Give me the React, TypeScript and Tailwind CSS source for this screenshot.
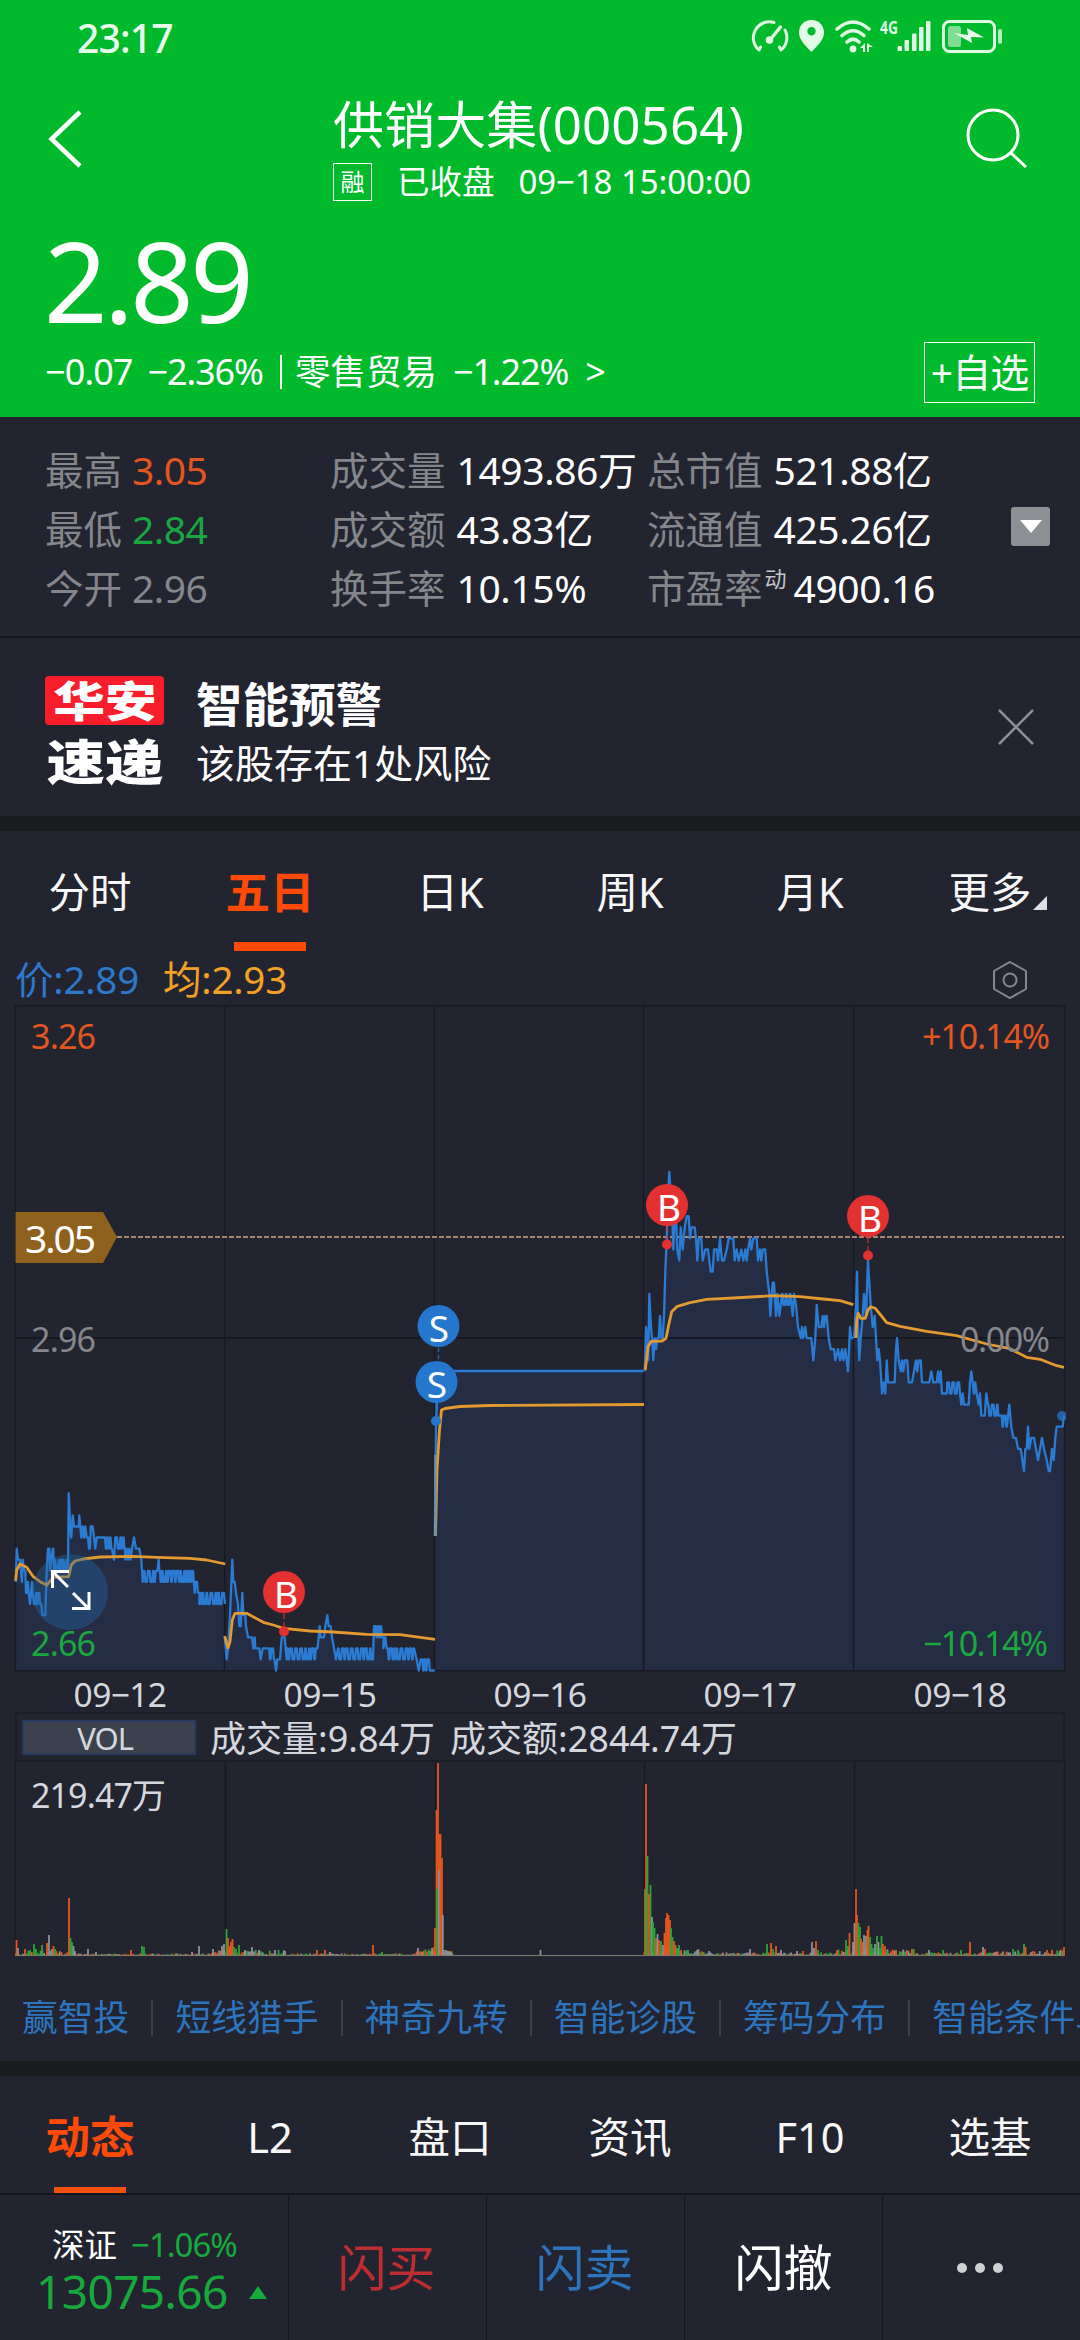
import React from "react";

type Step = [number, number] | [number, number, number, number];

const priceY = (p: number) => 1670.5 - 1005 - (p - 266) * 11.08;

const jitter = (n: number) => {
  const v = Math.sin(n * 127.1 + 11.7) * 43758.5453;
  return v - Math.floor(v);
};

/** Expands [x, price] knots and [from, to, low, high] oscillating spans. */
function expand(steps: Step[], originX: number): [number, number][] {
  const out: [number, number][] = [];
  steps.forEach((s) => {
    if (s.length === 2) {
      out.push([originX + s[0] / 3, priceY(s[1])]);
      return;
    }
    const [from, to, low, high] = s;
    let up = true;
    let x = from;
    while (x < to) {
      const y = priceY(up ? high : low);
      out.push([originX + x / 3, y]);
      const hold = jitter(x) > 0.55 ? 5 : 1.5;
      out.push([originX + (x + hold) / 3, y]);
      x += hold + 2.6;
      up = !up;
    }
  });
  return out;
}

const toPath = (pts: [number, number][]) =>
  "M" + pts.map(([x, y]) => `${x.toFixed(1)} ${y.toFixed(1)}`).join("L");

const DAY1 = expand(
  [
    [47, 274], [50, 277], [54, 276], [60, 276], [63, 275], [66, 274], [68, 276], [72, 275], [76, 275], [78, 273], [82, 273],
    [84, 274], [86, 273], [90, 272], [93, 273], [96, 274], [98, 273], [102, 272], [106, 272], [108, 273], [112, 272], [114, 273],
    [118, 273], [120, 272], [124, 272], [127, 271], [136, 271], [138, 273], [140, 275], [144, 277], [148, 277], [150, 275],
    [154, 276], [158, 277], [160, 277], [162, 275], [166, 276], [168, 275], [172, 275], [178, 276], [180, 275], [184, 276],
    [188, 275], [190, 276], [196, 275], [200, 276], [204, 275], [206, 282], [208, 281], [210, 279], [214, 278], [218, 280],
    [222, 279], [236, 279], [238, 280], [241, 279], [244, 278], [248, 279], [252, 278], [256, 279], [260, 278], [264, 278],
    [267, 277], [270, 277], [272, 279], [278, 279], [282, 278], [286, 277], [290, 278], [308, 278], [310, 338, 277, 278],
    [342, 276], [346, 374, 277, 278], [376, 276], [380, 277], [384, 276], [388, 277], [392, 276], [396, 277], [402, 278],
    [408, 277], [418, 277], [424, 276], [428, 274], [432, 472, 274, 275], [476, 276], [478, 578, 274, 275], [584, 273],
    [586, 594, 273, 274], [598, 272], [600, 668, 272, 273], [675, 272],
  ],
  0,
);

const DAY2 = expand(
  [
    [674, 269], [680, 267], [684, 268], [690, 271], [697, 276], [700, 274], [704, 274], [708, 273], [714, 272], [718, 270],
    [722, 270], [727, 273], [730, 271], [736, 271], [738, 270], [744, 269], [756, 269], [760, 268], [764, 269], [766, 268],
    [778, 268], [782, 267], [788, 268], [804, 268], [806, 824, 267, 268], [828, 266], [832, 267], [840, 267], [845, 269],
    [854, 269], [860, 267], [862, 950, 267, 268], [956, 269], [959, 270], [962, 269], [972, 269], [976, 270], [982, 271],
    [986, 270], [992, 270], [996, 269], [1002, 268], [1008, 267], [1014, 1118, 267, 268], [1122, 1146, 269, 270], [1150, 268],
    [1156, 269], [1160, 268], [1162, 1244, 267, 268], [1250, 267], [1256, 266], [1262, 1292, 266, 267], [1304, 266],
  ],
  0,
);

const DAY3: [number, number][] = [
  [434.8, 531], [436, 419], [438.5, 366], [643.6, 366],
];

const DAY4 = expand(
  [
    [14, 293], [18, 297], [22, 296], [25, 294], [28, 300], [33, 297], [36, 296], [40, 294], [44, 296], [48, 295], [52, 296],
    [56, 296], [60, 298], [64, 296], [68, 296], [72, 298], [76, 302], [80, 305], [84, 309], [88, 311], [92, 309], [96, 308],
    [100, 304], [104, 307], [108, 307], [112, 304], [118, 303], [122, 306], [128, 304], [134, 306], [140, 307], [146, 307],
    [150, 305], [154, 306], [164, 306], [168, 305], [172, 303], [176, 305], [184, 305], [188, 303], [196, 304], [204, 304],
    [208, 303], [212, 302], [218, 302], [222, 304], [230, 304], [234, 303], [240, 305], [246, 303], [252, 303], [260, 304],
    [266, 305], [280, 305], [284, 303], [290, 304], [296, 303], [304, 304], [310, 303], [316, 304], [320, 303], [324, 304],
    [330, 305], [334, 304], [340, 305], [350, 305], [354, 303], [360, 304], [364, 303], [368, 304], [376, 304], [378, 303],
    [380, 302], [384, 301], [388, 300], [391, 298], [398, 301], [402, 301], [408, 298], [412, 300], [418, 298], [422, 299],
    [426, 452, 299, 300], [458, 298], [462, 300], [468, 299], [474, 297], [482, 296], [486, 297], [490, 296], [496, 297],
    [500, 296], [514, 296], [520, 294], [526, 296], [530, 299], [536, 297], [544, 297], [548, 298], [552, 297], [556, 298],
    [560, 298], [566, 296], [572, 295], [582, 295], [586, 294], [594, 295], [600, 294], [606, 295], [610, 294], [616, 295],
    [624, 293], [630, 297], [634, 296], [640, 296],
  ],
  640,
);

const DAY5 = expand(
  [
    [642, 296], [648, 299], [651, 302], [654, 297], [658, 294], [662, 296], [668, 298], [672, 300], [678, 298], [684, 303],
    [688, 301], [692, 299], [698, 297], [704, 298], [708, 296], [712, 294], [716, 295], [720, 294], [726, 291], [730, 292],
    [736, 291], [740, 294], [744, 292], [764, 292], [768, 295], [771, 296], [776, 294], [782, 293], [786, 294], [790, 293],
    [794, 294], [802, 294], [806, 292], [816, 292], [822, 293], [828, 294], [832, 293], [836, 294], [842, 294], [846, 292],
    [868, 292], [874, 293], [880, 292], [890, 292], [894, 293], [898, 292], [902, 293], [906, 291], [920, 291],
    [922, 956, 291, 292], [960, 291], [964, 290], [968, 291], [972, 290], [986, 290], [990, 292], [994, 293], [998, 292],
    [1002, 291], [1006, 292], [1010, 291], [1016, 290], [1020, 291], [1024, 289], [1034, 289], [1039, 291],
    [1044, 1076, 289, 290], [1080, 1100, 288, 289], [1108, 290], [1114, 288], [1120, 287], [1128, 287], [1134, 286],
    [1142, 286], [1147, 285], [1152, 284], [1156, 286], [1160, 286], [1164, 288], [1168, 286], [1174, 287], [1182, 287],
    [1188, 286], [1194, 285], [1200, 286], [1206, 287], [1212, 286], [1220, 285], [1226, 284], [1230, 284], [1236, 286],
    [1241, 285], [1246, 287], [1250, 288], [1268, 288], [1272, 289],
  ],
  640,
);

const scalePts = (pts: [number, number][], ox: number, oy: number): [number, number][] =>
  pts.map(([x, y]) => [ox + x / 3, oy + y / 3]);

const AVERAGES = [
  scalePts([[47, 362], [50, 330], [60, 312], [80, 322], [100, 350], [120, 365], [140, 375], [146, 368], [160, 352], [206, 350], [214, 315], [225, 303], [250, 297], [300, 291], [400, 289], [470, 292], [570, 295], [620, 300], [676, 312]], 0, 455),
  scalePts([[674, 528], [684, 564], [690, 545], [697, 480], [705, 460], [740, 460], [790, 487], [820, 495], [850, 505], [930, 513], [1000, 516], [1100, 523], [1200, 524], [1305, 538]], 0, 455),
  [[435.5, 531], [437, 465], [439.5, 425], [441.5, 405], [445, 403.5], [460, 401.5], [490, 400.5], [644, 399.5]] as [number, number][],
  scalePts([[16, 630], [24, 560], [34, 544], [66, 543], [78, 535], [86, 495], [95, 455], [110, 440], [150, 428], [200, 418], [280, 414], [400, 407], [480, 410], [550, 417], [600, 422], [640, 434]], 640, 155),
  scalePts([[648, 534], [650, 480], [655, 460], [662, 475], [676, 475], [684, 450], [692, 440], [706, 445], [722, 465], [740, 488], [780, 499], [860, 514], [950, 527], [1040, 552], [1110, 566], [1160, 592], [1200, 598], [1250, 617], [1272, 622]], 640, 155),
];

const DIVIDERS = [224.5, 434.5, 643.5, 853.5];

function Marker({ x, y, dot, letter, color }: { x: number; y: number; dot?: [number, number]; letter: string; color: string }) {
  return (
    <g>
      {dot && (
        <>
          <line x1={dot[0]} x2={dot[0]} y1={y} y2={dot[1]} stroke={color} strokeWidth="1.5" strokeDasharray="7 3" opacity="0.7" />
          <circle cx={dot[0]} cy={dot[1]} r="5" fill={color} />
        </>
      )}
      <circle cx={x} cy={y} r="21" fill={color} />
      <text x={x + (letter === "B" ? 2 : 0.5)} y={y + 16} fontSize="37" fill="#fff" textAnchor="middle">
        {letter}
      </text>
    </g>
  );
}

function PriceChart() {
  const days = [DAY1, DAY2, DAY3, DAY4, DAY5];
  return (
    <svg width="1080" height="672" viewBox="0 0 1080 672" className="block">
      {days.map((d, i) => (
        <path key={i} d={`${toPath(d)}L${d[d.length - 1][0]} 665.5L${d[0][0]} 665.5Z`} fill="#252d45" />
      ))}
      <g stroke="#171922" strokeWidth="1.4" fill="none">
        <rect x="15.5" y="0.7" width="1049" height="665" />
        {DIVIDERS.map((x) => (
          <line key={x} x1={x} x2={x} y1="0" y2="665.5" />
        ))}
        <line x1="15.5" x2="1063" y1="333" y2="333" strokeWidth="2" />
      </g>
      <line x1="117" x2="1064" y1="232" y2="232" stroke="#d3a982" strokeWidth="1.4" strokeDasharray="5 2" />
      <g fill="none" stroke="#2a7bd1" strokeWidth="2.3" strokeLinejoin="round">
        {days.map((d, i) => (
          <path key={i} d={toPath(d)} />
        ))}
      </g>
      <g fill="none" stroke="#e29a31" strokeWidth="2.8" strokeLinejoin="round">
        {AVERAGES.map((d, i) => (
          <path key={i} d={toPath(d)} />
        ))}
      </g>
      <line x1="435.5" x2="435.5" y1="450" y2="531" stroke="#6f92a5" strokeWidth="2.5" />
      <circle cx="70" cy="587" r="38" fill="#2468a8" opacity="0.38" />
      <g stroke="#fff" strokeWidth="3" fill="none">
        <path d="M52.5 583V566.500H69M53 567L68 582" />
        <path d="M72 603.500H89V587M73 588L88 603" />
      </g>
      <path d="M15.500 207H103L117 232L103 258H15.500Z" fill="#8e611d" />
      <circle cx="1062" cy="411" r="5" fill="#2a7bd1" opacity="0.7" />
      <rect x="1066" y="400" width="8" height="20" fill="#222430" />
      <Marker x={438.500} y={321} letter="S" color="#2477cd" />
      <line x1="438.500" x2="438.500" y1="343" y2="356" stroke="#2a5d98" strokeWidth="1.500" strokeDasharray="4 3" />
      <Marker x={436.500} y={377} dot={[436, 416]} letter="S" color="#2477cd" />
      <Marker x={284} y={587} dot={[284, 626.500]} letter="B" color="#e33131" />
      <Marker x={667} y={200} dot={[667, 239.500]} letter="B" color="#e33131" />
      <Marker x={868} y={211} dot={[868, 250.500]} letter="B" color="#e33131" />
      <g fontSize="34">
        <text x="31" y="44" fill="#e2561f" textLength="65">3.26</text>
        <text x="1050" y="44" fill="#e2561f" textAnchor="end" textLength="128">+10.14%</text>
        <text x="31" y="347" fill="#84868c" textLength="65">2.96</text>
        <text x="1050" y="347" fill="#84868c" textAnchor="end" textLength="90">0.00%</text>
        <text x="31" y="651" fill="#1ba640" textLength="65">2.66</text>
        <text x="923" y="651" fill="#1ba640" textLength="125">−10.14%</text>
      </g>
      <text x="25" y="248" fontSize="39" fill="#fff" textLength="71">3.05</text>
    </svg>
  );
}

type Bar = [number, number, "r" | "g" | "n"];
const PEAKS: Bar[] = [
  [16.500, 16, "r"], [18, 8, "n"], [25, 7, "r"], [30, 6, "g"], [34, 12, "g"], [36, 7, "g"], [42, 11, "g"], [47, 13, "r"], [49, 21, "n"], [52, 7, "n"],
  [53.500, 10, "r"], [55, 7, "g"], [69, 58, "r"], [70.500, 18, "g"], [72, 14, "g"], [73.500, 10, "n"], [75, 5, "n"], [88, 7, "n"], [96, 4, "n"], [131, 6, "r"],
  [142, 10, "g"], [144, 9, "g"], [192, 4, "n"], [199, 10, "n"], [213, 7, "n"], [222, 10, "n"], [224, 12, "n"], [226.500, 27, "g"], [228, 18, "r"],
  [229.500, 10, "r"], [231, 14, "r"], [232.500, 17, "r"], [234, 9, "g"], [236, 7, "g"], [239, 11, "g"], [245, 6, "n"], [252, 9, "n"], [259, 6, "n"], [275, 6, "n"],
  [285, 5, "n"], [317, 6, "r"], [325, 6, "r"], [330, 4, "n"], [373, 11, "r"], [382, 4, "g"], [418, 8, "n"], [430, 5, "g"], [432, 8, "n"], [434, 9, "r"],
  [435, 28, "r"], [436.500, 146, "r"], [438, 193, "r"], [439.500, 122, "r"], [437, 67, "g"], [439, 86, "n"], [440.500, 122, "r"], [442, 98, "r"], [442.800, 41, "n"],
  [444, 6, "n"], [446, 6, "n"], [448, 5, "n"], [450, 4, "n"], [452, 3, "n"], [540.500, 6, "n"], [645, 67, "g"], [646, 172, "r"], [647.500, 100, "g"], [649, 62, "r"],
  [650.500, 71, "g"], [652, 39, "n"], [653, 34, "g"], [654.500, 28, "g"], [656, 18, "r"], [657.500, 22, "n"], [659, 16, "r"], [661, 15, "g"], [663, 11, "n"],
  [664.500, 23, "r"], [666, 38, "r"], [667, 43, "r"], [668.500, 41, "r"], [670, 36, "r"], [671, 28, "g"], [672.500, 19, "g"], [674, 15, "r"], [675.500, 11, "r"],
  [677, 8, "g"], [679, 11, "g"], [681, 6, "r"], [688, 6, "g"], [697, 6, "n"], [709, 5, "n"], [750, 7, "n"], [767, 12, "g"], [771, 13, "r"], [773, 7, "g"],
  [776, 10, "r"], [781, 6, "n"], [797, 5, "n"], [803, 5, "r"], [812, 14, "n"], [814, 8, "n"], [816, 15, "r"], [818, 6, "g"], [837, 6, "r"], [846, 16, "g"],
  [848, 10, "g"], [849.500, 23, "r"], [853, 14, "n"], [854.500, 33, "n"], [856, 67, "r"], [857, 41, "r"], [858.500, 33, "g"], [860, 29, "g"], [861, 17, "r"], [862.500, 14, "r"],
  [864, 21, "n"], [866, 20, "n"], [867.500, 26, "r"], [868.500, 30, "r"], [870, 19, "g"], [871.500, 12, "g"], [873, 8, "g"], [875, 12, "n"], [877, 20, "g"],
  [878.500, 14, "n"], [880, 8, "g"], [881.500, 20, "g"], [883, 12, "r"], [885, 10, "r"], [887, 5, "g"], [896, 6, "r"], [929, 6, "n"], [943, 6, "g"],
  [961, 6, "g"], [970, 14, "r"], [983, 9, "n"], [985, 7, "r"], [1013, 7, "g"], [1018, 6, "g"], [1024, 12, "g"], [1025.500, 9, "r"], [1047, 6, "r"], [1052, 6, "r"],
  [1060, 5, "n"], [1064, 9, "r"],
];

const BAR_COLORS = { r: "#e4571f", g: "#2fa23b", n: "#8f9195" };

function VolumeChart() {
  const noise: Bar[] = [];
  for (let x = 16; x < 1064; x += 1.75) {
    const quiet = x > 452 && x < 643;
    const day = (x - 15.5) % 210;
    const busy = x > 643 ? (x > 990 ? 4 : 2.6) : 1.6;
    const h = quiet ? 0.8 : 1 + jitter(x) * (busy + (day < 60 ? 3.5 : 0) + (day > 190 ? 4 : 0));
    const k = jitter(x * 3.3);
    noise.push([x, h, quiet || k < 0.4 ? "n" : k < 0.7 ? "g" : "r"]);
  }
  return (
    <svg width="1080" height="196" viewBox="0 0 1080 196" className="block">
      <g stroke="#171922" strokeWidth="1.4">
        <line x1="15.500" x2="15.500" y1="0" y2="194" />
        {[225.500, 435.500, 644.500, 854.500, 1064.500].map((x) => (
          <line key={x} x1={x} x2={x} y1="0" y2="194" />
        ))}
      </g>
      {[...noise, ...PEAKS].map(([x, h, c], i) => (
        <rect key={i} x={x - 0.9} y={194 - h} width="1.800" height={h} fill={BAR_COLORS[c]} />
      ))}
      <line x1="15.500" x2="1064" y1="193.600" y2="193.600" stroke="#777a70" strokeWidth="0.900" />
      <text x="31" y="46" fontSize="34" fill="#d5d7de" textLength="135">219.47万</text>
    </svg>
  );
}

function StatusIcons() {
  return (
    <svg width="256" height="36" viewBox="0 0 256 36" fill="none" stroke="#dff8e4" className="block overflow-visible">
      <g strokeWidth="3" strokeLinecap="round">
        <path d="M8 32A16 16 0 0 1 23 4.500M34 12A16 16 0 0 1 30 32M8 32L9.500 29M30 32L28.500 29" />
        <path d="M19 22L29.500 9" strokeWidth="3.500" />
      </g>
      <circle cx="18.500" cy="22" r="3.800" fill="#dff8e4" stroke="none" />
      <path fillRule="evenodd" d="M60.500 2C53 2 48 7.500 48 14.500C48 22 54 27 60.500 34C67 27 73 22 73 14.500C73 7.500 68 2 60.500 2ZM60.500 9A4.200 4.200 0 1 1 60.500 17.400A4.200 4.200 0 1 1 60.500 9Z" fill="#e3fae8" stroke="none" />
      <g strokeWidth="3.600" strokeLinecap="round">
        <path d="M86 11Q102 -3 118 11" />
        <path d="M91 17.500Q102 8 113 17.500" />
        <path d="M96 24Q102 18.500 108 24" />
      </g>
      <circle cx="102" cy="31" r="3.400" fill="#dff8e4" stroke="none" />
      <path d="M109 30L114 25V34H112V30ZM116 25L122 29H118V34H116Z" fill="#dff8e4" stroke="none" />
      <g fill="#dff8e4" stroke="none">
        <rect x="146.500" y="28" width="4.500" height="5" rx="1" />
        <rect x="153.500" y="22" width="4.500" height="11" rx="1" />
        <rect x="161" y="15.500" width="4.500" height="17.500" rx="1" />
        <rect x="168" y="9" width="4.500" height="24" rx="1" />
        <rect x="175" y="3" width="4.500" height="30" rx="1" />
        <text x="129" y="16" fontSize="18" fontWeight="700" textLength="18" lengthAdjust="spacingAndGlyphs">4G</text>
      </g>
      <rect x="192.500" y="3.500" width="51" height="30" rx="6" strokeWidth="3" />
      <rect x="197" y="8" width="13" height="21" rx="2.500" fill="#7fdc94" stroke="none" />
      <path d="M203 15L217 17L216 10L233 19.500L220 19L221 25Z" fill="#e8fbec" stroke="none" />
      <rect x="247" y="11" width="4" height="15" rx="2" fill="#b5edc1" stroke="none" />
    </svg>
  );
}

const STATS = [
  ["最高", "3.05", "text-[#e2561f]", "成交量", "1493.86万", "总市值", "521.88亿"],
  ["最低", "2.84", "text-[#1ba640]", "成交额", "43.83亿", "流通值", "425.26亿"],
  ["今开", "2.96", "text-[#84868c]", "换手率", "10.15%", "市盈率", "4900.16"],
];

const LINKS = ["赢智投", "短线猎手", "神奇九转", "智能诊股", "筹码分布", "智能条件单"];

function Tab({ label, active, low }: { label: string; active?: boolean; low?: boolean }) {
  return (
    <div className="relative flex w-[180px] flex-none justify-center">
      <span
        className={
          active
            ? "text-[44.5px] leading-[58px] font-bold whitespace-nowrap text-[#fd4a08]"
            : "text-[41.5px] leading-[58px] whitespace-nowrap text-[#f7f7f8]"
        }
      >
        {label}
      </span>
      {active && (
        <span className={low ? "absolute top-[79px] h-[6px] w-[72px] bg-[#f4500f]" : "absolute top-[79px] h-[9px] w-[72px] bg-[#fd4a08]"} />
      )}
      {label === "更多" && (
        <svg width="14" height="14" viewBox="0 0 15 15" className="absolute top-[33px] left-[133px]">
          <path d="M15 0V15H0Z" fill="#dfe0e6" />
        </svg>
      )}
    </div>
  );
}

export default function App() {
  return (
    <div className="flex h-[2340px] w-[1080px] flex-col overflow-hidden bg-[#222430] font-['Noto_Sans','Noto_Sans_CJK_SC',sans-serif] text-white">
      <header className="flex h-[417px] flex-none flex-col bg-[#00ba2c]">
        <div className="flex h-[76px] items-end justify-between pr-[73px] pl-[77px]">
          <span className="text-[39px] leading-[76px] font-medium tracking-[-0.8px] text-[#e9fbed]">23:17</span>
          <div className="mb-[22px]">
            <StatusIcons />
          </div>
        </div>
        <div className="flex h-[136px] items-start pr-[52px] pl-[47px]">
          <svg width="36" height="58" viewBox="0 0 36 58" fill="none" stroke="#fff" strokeWidth="4.500" className="mt-[34px]">
            <path d="M33 2L4.500 29L33 56" />
          </svg>
          <div className="ml-[250px] flex flex-col items-start pt-[18px]">
            <h1 className="text-[51px] leading-[60px] tracking-[0.1px] whitespace-nowrap">供销大集(000564)</h1>
            <div className="mt-[8px] flex items-center text-[33px] leading-[40px] whitespace-nowrap">
              <span className="flex h-[38px] w-[39px] items-center justify-center border border-white text-[24px] leading-[34px]">融</span>
              <span className="ml-[25px] text-[32.5px]">已收盘</span>
              <span className="ml-[24px] tracking-[-0.1px]">09−18 15:00:00</span>
            </div>
          </div>
          <svg width="62" height="62" viewBox="0 0 62 62" fill="none" stroke="#fff" strokeWidth="3" className="mt-[32px] ml-auto">
            <circle cx="27" cy="27" r="25" />
            <path d="M45 45L60 59" />
          </svg>
        </div>
        <div className="h-[130px] pl-[44px] text-[111px] leading-[137px] font-[450] tracking-[-3.5px]">2.89</div>
        <div className="flex h-[60px] items-center pr-[45px] pl-[45px] text-[36px] whitespace-nowrap">
          <span className="tracking-[-0.9px]">−0.07</span>
          <span className="ml-[15px] tracking-[-1.1px]">−2.36%</span>
          <span className="ml-[17px] h-[34px] w-[2px] bg-white" />
          <span className="ml-[13px] text-[35.500px]">零售贸易</span>
          <span className="ml-[16px] tracking-[-1.1px]">−1.22%</span>
          <span className="ml-[17px]">&gt;</span>
          <span className="ml-auto flex h-[61px] w-[111px] flex-none items-center justify-center border border-white text-[39px] leading-[50px] tracking-[-1px]">+自选</span>
        </div>
      </header>

      <section className="flex h-[221px] flex-none items-center border-b-2 border-[#13151d] pr-[30px] pl-[45px]">
        <div className="flex flex-1 flex-col pt-[4px]">
          {STATS.map(([a, av, color, b, bv, c, cv]) => (
            <div key={a} className="flex h-[59px] items-center text-[38.5px] leading-[50px] whitespace-nowrap text-[#84868c]">
              <div className="flex w-[285px] items-center">
                {a}
                <span className={"ml-[10px] text-[39px] tracking-[-0.5px] " + color}>{av}</span>
              </div>
              <div className="flex w-[317px] items-center">
                {b}
                <span className="ml-[11px] text-[39px] tracking-[-0.4px] text-white">{bv}</span>
              </div>
              <div className="flex items-center">
                {c}
                {c === "市盈率" && <span className="mb-[20px] ml-[2px] text-[22px] leading-[30px] text-[#c4c5ca]">动</span>}
                <span className={(c === "市盈率" ? "ml-[7px] " : "ml-[11px] ") + "text-[39px] tracking-[-0.4px] text-white"}>{cv}</span>
              </div>
            </div>
          ))}
        </div>
        <div className="flex h-[39px] w-[39px] items-center justify-center rounded-[3px] bg-[#8d9094]">
          <svg width="22" height="13" viewBox="0 0 22 13">
            <path d="M0 0H22L11 13Z" fill="#fff" />
          </svg>
        </div>
      </section>

      <section className="flex h-[178px] flex-none items-center pr-[46px] pl-[45px]">
        <div className="flex w-[119px] flex-col items-center pt-[10px]">
          <div className="flex h-[49px] w-[119px] items-center justify-center rounded-[4px] bg-[#f81d2a] whitespace-nowrap">
            <span className="scale-x-110 scale-y-90 text-[47px] leading-[48px] font-black">华安</span>
          </div>
          <div className="mt-[13px] h-[50px] scale-x-110 scale-y-90 text-[53px] leading-[48px] font-black whitespace-nowrap">速递</div>
        </div>
        <div className="ml-[32px] flex flex-col pt-[12px]">
          <span className="text-[46.5px] leading-[59px] font-bold">智能预警</span>
          <span className="text-[39px] leading-[58px]">该股存在1处风险</span>
        </div>
        <svg width="36" height="36" viewBox="0 0 36 36" stroke="#8c8e95" strokeWidth="2.500" className="ml-auto">
          <path d="M1 1L35 35M35 1L1 35" />
        </svg>
      </section>
      <div className="h-[15px] flex-none bg-[#1b1c1f]" />

      <nav className="flex h-[127px] flex-none pt-[32px]">
        <Tab label="分时" />
        <Tab label="五日" active />
        <Tab label="日K" />
        <Tab label="周K" />
        <Tab label="月K" />
        <Tab label="更多" />
      </nav>

      <div className="flex h-[47px] flex-none items-center pr-[52px] pb-[4px] pl-[15px] text-[38.5px] leading-[43px] whitespace-nowrap">
        <span className="tracking-[-0.2px] text-[#2d78c8]">价:2.89</span>
        <span className="ml-[24px] tracking-[-0.2px] text-[#f3a126]">均:2.93</span>
        <svg width="36" height="40" viewBox="0 0 36 40" fill="none" stroke="#85878c" strokeWidth="2" className="ml-auto">
          <path d="M18 2L34 11V29L18 38L2 29V11Z" />
          <circle cx="18" cy="20" r="6.500" />
        </svg>
      </div>

      <div className="h-[672px] flex-none">
        <PriceChart />
      </div>
      <div className="flex h-[35px] flex-none pr-[15px] pl-[15px] text-[33.500px] leading-[34px] tracking-[-0.6px] text-[#d5d7de]">
        {["09−12", "09−15", "09−16", "09−17", "09−18"].map((d) => (
          <span key={d} className="flex-1 text-center">
            {d}
          </span>
        ))}
      </div>
      <div className="mx-[15px] flex h-[50px] flex-none items-center border-2 border-[#1b1d27] pl-[5px] text-[36px] leading-[48px] whitespace-nowrap text-[#d5d7de]">
        <span className="flex h-[35px] w-[174px] items-center justify-center border-2 border-[#283a5f] bg-[#3b424e] pt-[2px] pr-[8px] text-[31px] leading-[31px]">
          <span className="tracking-[-1px]">VOL</span>
        </span>
        <span className="ml-[14px] pt-[3px]">成交量:9.84万</span>
        <span className="ml-[15px] pt-[3px]">成交额:2844.74万</span>
      </div>
      <div className="h-[196px] flex-none">
        <VolumeChart />
      </div>

      <div className="flex h-[103px] flex-none items-center overflow-hidden pt-[16px] pl-[22px] text-[35.800px] whitespace-nowrap text-[#2d74bd]">
        {LINKS.map((l, i) => (
          <React.Fragment key={l}>
            {i > 0 && <span className="mx-[22px] h-[36px] w-[2px] flex-none bg-[#3c4049]" />}
            <span className="flex-none">{l}</span>
          </React.Fragment>
        ))}
      </div>
      <div className="h-[15px] flex-none bg-[#1b1c1f]" />

      <nav className="flex h-[119px] flex-none border-b-2 border-[#13151d] pt-[32px]">
        <Tab label="动态" active low />
        <Tab label="L2" />
        <Tab label="盘口" />
        <Tab label="资讯" />
        <Tab label="F10" />
        <Tab label="选基" />
      </nav>

      <footer className="flex flex-1">
        <div className="flex w-[289px] flex-col border-r border-[#13151d] pt-[28px]">
          <div className="flex items-center pl-[52px] leading-[44px] whitespace-nowrap">
            <span className="text-[32.5px]">深证</span>
            <span className="ml-[14px] text-[33px] tracking-[-1px] text-[#17a93c]">−1.06%</span>
          </div>
          <div className="flex items-center pl-[36px] leading-[48px]">
            <span className="text-[46px] tracking-[-0.6px] text-[#17a93c]">13075.66</span>
            <svg width="18" height="13" viewBox="0 0 18 13" className="mt-[2px] ml-[21px]">
              <path d="M9 0L18 13H0Z" fill="#17a93c" />
            </svg>
          </div>
        </div>
        <div className="flex w-[198px] items-center justify-center border-r border-[#13151d] pr-[2px] text-[49px] text-[#bd2e33]">闪买</div>
        <div className="flex w-[198px] items-center justify-center border-r border-[#13151d] pr-[2px] text-[49px] text-[#2d74bd]">闪卖</div>
        <div className="flex w-[198px] items-center justify-center border-r border-[#13151d] text-[49px]">闪撤</div>
        <div className="flex flex-1 items-center justify-center gap-[8px] pr-[3px]">
          <span className="h-[10px] w-[10px] rounded-full bg-[#cfd0d3]" />
          <span className="h-[10px] w-[10px] rounded-full bg-[#cfd0d3]" />
          <span className="h-[10px] w-[10px] rounded-full bg-[#cfd0d3]" />
        </div>
      </footer>
    </div>
  );
}
